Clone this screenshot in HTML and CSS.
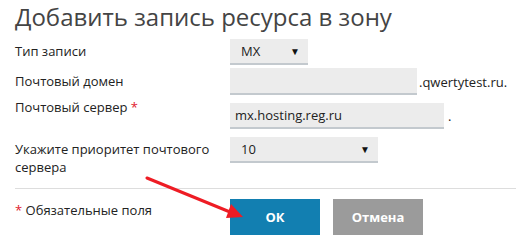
FILE: index.html
```html
<!DOCTYPE html>
<html lang="ru">
<head>
    <meta charset="UTF-8">
    <title>Добавить запись ресурса в зону</title>
    <link rel="stylesheet" href="styles.css">
</head>
<body>
    <div class="dialog">
        <h1>Добавить запись ресурса в зону</h1>

        <div class="form">
            <div class="row row-type">
                <div class="label">Тип записи</div>
                <div class="field">
                    <div class="select select-type">MX <span class="caret">▼</span></div>
                </div>
            </div>

            <div class="row row-domain">
                <div class="label">Почтовый домен</div>
                <div class="field">
                    <div class="input input-domain"></div>
                    <span class="suffix">.qwertytest.ru.</span>
                </div>
            </div>

            <div class="row row-server">
                <div class="label">Почтовый сервер <span class="req">*</span></div>
                <div class="field">
                    <div class="input input-server">mx.hosting.reg.ru</div>
                    <span class="suffix dot">.</span>
                </div>
            </div>

            <div class="row row-priority">
                <div class="label">Укажите приоритет почтового сервера</div>
                <div class="field">
                    <div class="select select-priority">10 <span class="caret">▼</span></div>
                </div>
            </div>
        </div>

        <div class="footer">
            <div class="note"><span class="req">*</span> Обязательные поля</div>
            <div class="actions">
                <button class="btn btn-ok">ОК</button>
                <button class="btn btn-cancel">Отмена</button>
            </div>
        </div>
    </div>

    <svg class="pointer" width="516" height="246" viewBox="0 0 516 246">
        <line x1="147" y1="178" x2="230" y2="212" stroke="#ee1c24" stroke-width="3" stroke-linecap="round"/>
        <polygon points="243,217 231,204 226,218" fill="#ee1c24"/>
    </svg>
</body>
</html>
```

FILE: styles.css
```css
body {
    margin: 0;
    font-family: 'Open Sans', sans-serif;
    font-size: 13px;
    color: #222;
    background: #fff;
}

.dialog {
    padding-left: 15px;
}

h1 {
    margin: 0;
    font-size: 24px;
    font-weight: 400;
    line-height: 33px;
    color: #444;
}

.row {
    display: flex;
    align-items: flex-start;
}

.label {
    width: 215px;
    padding-right: 10px;
    box-sizing: border-box;
    line-height: 18px;
}

.req {
    color: #e0202e;
}

.field {
    display: flex;
    align-items: center;
}

.select,
.input {
    box-sizing: border-box;
    height: 26px;
    line-height: 24px;
    background: #ececec;
    border-bottom: 2px solid #c3c9ce;
}

.select {
    display: flex;
    justify-content: space-between;
    padding: 0 8px 0 11px;
}

.caret {
    font-size: 10px;
    color: #111;
}

.select-type { width: 78px; }
.select-priority { width: 148px; }

.input {
    padding: 0 5px;
}

.input-domain { width: 187px; height: 27px; }
.input-server { width: 214px; }

.suffix {
    padding-left: 2px;
}

.suffix.dot {
    padding-left: 4px;
}

/* rows are not evenly spaced in the original */
.row-type { margin-top: 6px; }
.row-type .label { padding-top: 3px; }

.row-domain { margin-top: 3px; }
.row-domain .label { padding-top: 4px; }

.row-server { margin-top: 3px; }
.row-server .field { margin-top: 5px; }

.row-priority { margin-top: 8px; }
.row-priority .label { padding-top: 3px; }

.footer {
    display: flex;
    align-items: flex-start;
    margin-top: 12px;
    padding-top: 10px;
    border-top: 1px solid #ddd;
}

.note {
    width: 215px;
    padding-top: 2px;
    line-height: 18px;
}

.actions {
    display: flex;
    gap: 13px;
}

.btn {
    width: 90px;
    height: 36px;
    border: none;
    color: #fff;
    font-family: 'Open Sans', sans-serif;
    font-size: 13px;
    font-weight: 700;
    cursor: pointer;
}

.btn-ok { background: #127fb1; }
.btn-cancel { background: #9b9b9b; }

.pointer {
    position: absolute;
    top: 0;
    left: 0;
    pointer-events: none;
}
```
